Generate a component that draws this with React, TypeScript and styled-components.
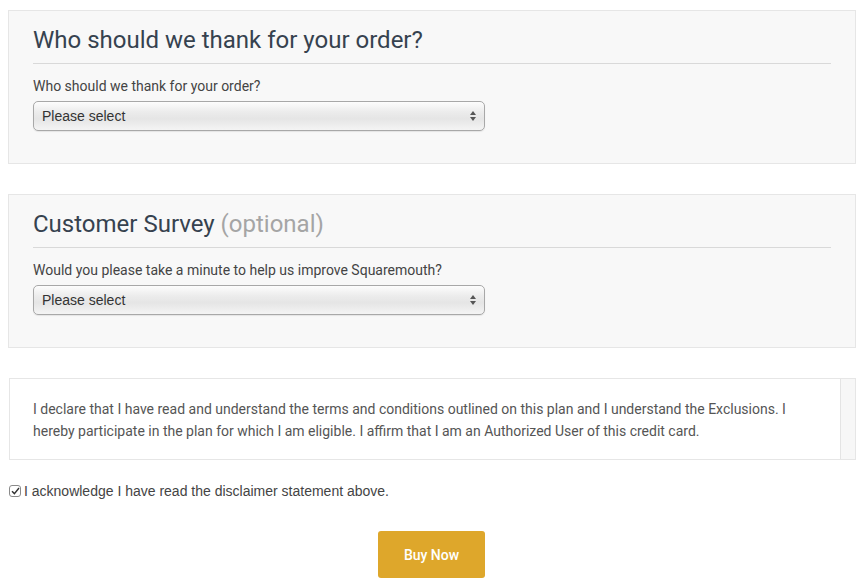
import React from "react";
import styled, { createGlobalStyle } from "styled-components";

const Global = createGlobalStyle`
  html, body { margin: 0; padding: 0; background: #ffffff; }
  body { font-family: Roboto, "Liberation Sans", sans-serif; }
  * { box-sizing: border-box; }
`;

const Page = styled.div`
  width: 866px;
  padding: 10px 10px 0 8px;
  display: flex;
  flex-direction: column;
`;

const Panel = styled.section`
  background: #f8f8f8;
  border: 1px solid #e6e6e6;
  padding: 14px 24px 32px 24px;
  margin-bottom: 30px;
  height: 154px;
`;

const Heading = styled.h2`
  margin: 0;
  font-family: Roboto, sans-serif;
  font-weight: 400;
  font-size: 24px;
  line-height: 30px;
  color: #36424f;
  padding-bottom: 8px;
  border-bottom: 1px solid #d9d9d9;
`;

const Muted = styled.span`
  color: #a5a5a5;
`;

const Label = styled.label`
  display: block;
  margin-top: 13px;
  font-family: Roboto, sans-serif;
  font-size: 14px;
  line-height: 18px;
  color: #444;
`;

const SelectBox = styled.div`
  margin-top: 6px;
  width: 452px;
  height: 30px;
  border: 1px solid #a8a8a8;
  border-radius: 5px;
  background: linear-gradient(#fdfdfd 0%, #ececec 35%, #e5e5e5 60%, #f4f4f4 100%);
  box-shadow: 0 1px 1px rgba(0, 0, 0, 0.08);
  display: flex;
  align-items: center;
  justify-content: space-between;
  padding: 0 7px 0 8px;
  font-family: "Liberation Sans", Arial, sans-serif;
  font-size: 14px;
  color: #333;
`;

const Arrows = () => (
  <svg width="8" height="12" viewBox="0 0 8 12">
    <path d="M4 1 L7 5 L1 5 Z" fill="#555" />
    <path d="M4 11 L7 7 L1 7 Z" fill="#555" />
  </svg>
);

const Disclaimer = styled.div`
  margin-left: 1px;
  width: 847px;
  height: 82px;
  border: 1px solid #e6e6e6;
  background: #fff;
  display: flex;
`;

const DisclaimerText = styled.p`
  flex: 1;
  margin: 0;
  padding: 19px 20px 0 23px;
  font-family: Roboto, sans-serif;
  font-size: 14px;
  line-height: 22px;
  color: #555;
`;

const ScrollTrack = styled.div`
  width: 15px;
  background: #f7f7f7;
  border-left: 1px solid #e4e4e4;
`;

const CheckRow = styled.label`
  display: flex;
  align-items: center;
  gap: 3px;
  margin-top: 23px;
  margin-left: 1px;
  font-family: "Liberation Sans", Arial, sans-serif;
  font-size: 14px;
  color: #444;
`;

const CheckBox = styled.span`
  width: 12px;
  height: 12px;
  border: 1px solid #8a8a8a;
  border-radius: 3px;
  background: #fff;
  display: flex;
  align-items: center;
  justify-content: center;
`;

const ButtonRow = styled.div`
  display: flex;
  justify-content: center;
  margin-top: 32px;
  padding-right: 1px;
`;

const BuyButton = styled.button`
  width: 107px;
  height: 47px;
  border: none;
  border-radius: 3px;
  background: #dea72b;
  color: #fff;
  font-family: Roboto, sans-serif;
  font-weight: 500;
  font-size: 14px;
  cursor: pointer;
`;

export default function App() {
  return (
    <>
      <Global />
      <Page>
        <Panel>
          <Heading>Who should we thank for your order?</Heading>
          <Label>Who should we thank for your order?</Label>
          <SelectBox>
            <span>Please select</span>
            <Arrows />
          </SelectBox>
        </Panel>
        <Panel>
          <Heading>
            Customer Survey <Muted>(optional)</Muted>
          </Heading>
          <Label>Would you please take a minute to help us improve Squaremouth?</Label>
          <SelectBox>
            <span>Please select</span>
            <Arrows />
          </SelectBox>
        </Panel>
        <Disclaimer>
          <DisclaimerText>
            I declare that I have read and understand the terms and conditions outlined on this plan and I
            understand the Exclusions. I hereby participate in the plan for which I am eligible. I affirm that I
            am an Authorized User of this credit card.
          </DisclaimerText>
          <ScrollTrack />
        </Disclaimer>
        <CheckRow>
          <CheckBox>
            <svg width="9" height="8" viewBox="0 0 9 8">
              <path d="M1 4.2 L3.4 6.6 L8 1" fill="none" stroke="#333" strokeWidth="1.4" />
            </svg>
          </CheckBox>
          I acknowledge I have read the disclaimer statement above.
        </CheckRow>
        <ButtonRow>
          <BuyButton>Buy Now</BuyButton>
        </ButtonRow>
      </Page>
    </>
  );
}
